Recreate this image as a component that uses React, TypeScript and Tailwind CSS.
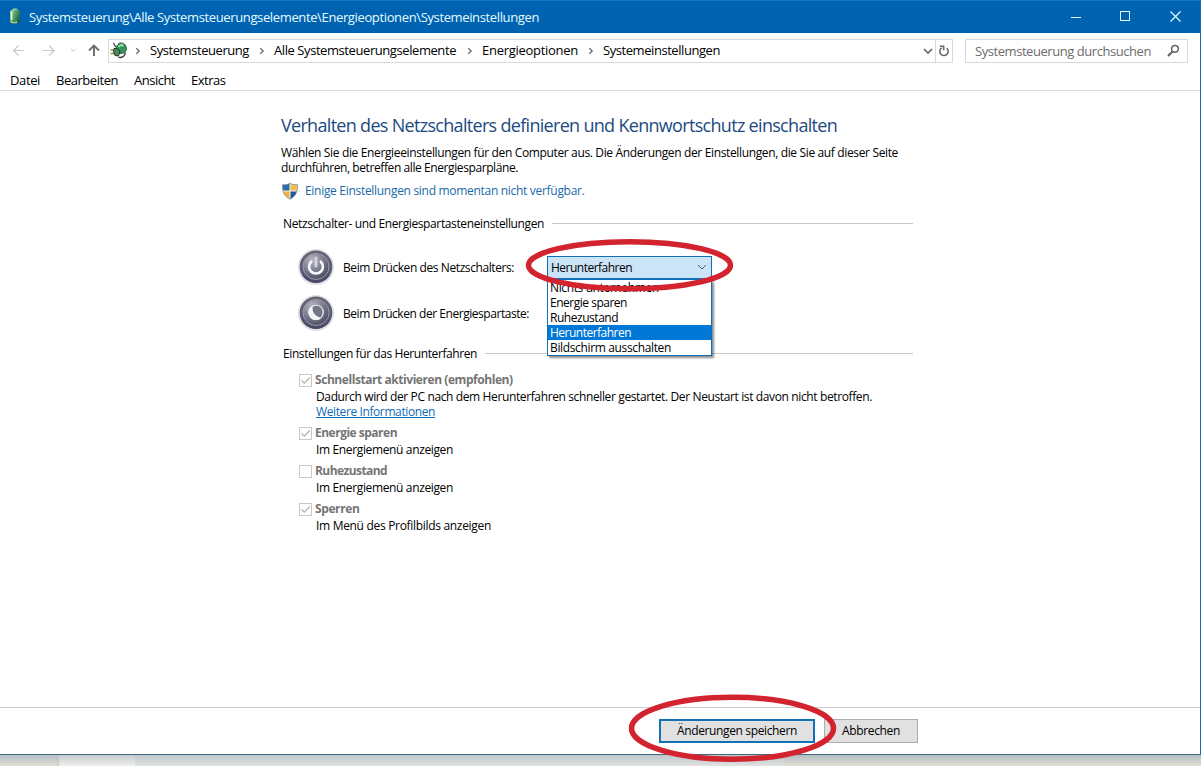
import React from "react";

function BatteryIcon() {
  return (
    <svg width="14" height="17" viewBox="0 0 14 17" className="shrink-0">
      <defs>
        <linearGradient id="bat" x1="0" x2="1" y1="0" y2="0.6">
          <stop offset="0" stopColor="#d3efb8" />
          <stop offset="0.45" stopColor="#58ac6c" />
          <stop offset="1" stopColor="#1a5f50" />
        </linearGradient>
      </defs>
      <rect x="4.500" y="0.500" width="5" height="3" rx="1" fill="#9fd5b0" />
      <rect x="2" y="1.800" width="10" height="13.400" rx="3" fill="url(#bat)" />
      <path d="M3.700 4v8" stroke="#e6f7cf" strokeWidth="1.400" />
      <path d="M2 12c2 2.200 5 2.400 7 1v2.200H4.500c-1.500 0-2.500-1-2.500-3.200z" fill="#b9c58c" />
    </svg>
  );
}

function PlugIcon() {
  return (
    <svg width="18" height="17" viewBox="0 0 18 17" className="shrink-0">
      <path d="M3.500 0.800c.5 2 1 3 2.800 4" stroke="#33423a" strokeWidth="1.200" fill="none" />
      <path d="M8 1.600c2.500-1.600 6.500-.8 7.800 2.400" stroke="#4f6b5a" strokeWidth="1" fill="none" />
      <ellipse cx="11.200" cy="6.600" rx="5.200" ry="4.800" fill="#2f9a58" stroke="#1c5b3c" />
      <path d="M8.500 4.800c1.200-1.700 3.500-2 5-1" stroke="#b4efbc" strokeWidth="1.700" fill="none" />
      <path d="M0.500 8h4M0.500 11.500h4" stroke="#a08a4c" strokeWidth="1.500" />
      <path d="M4 6.500l3.500 0 2.500 2.500-1.500 5-3.500-.5-1.300-3.500z" fill="#4d8a5e" stroke="#25362c" />
      <path d="M8.500 15.300c3.500.6 6.500-.8 6.800-4.800" stroke="#33423a" strokeWidth="1.500" fill="none" />
    </svg>
  );
}

function Chevron() {
  return (
    <svg width="6" height="8" viewBox="0 0 6 8" className="shrink-0">
      <path d="M1.300 1.200L4.200 4 1.300 6.800" fill="none" stroke="#6a6a6a" strokeWidth="1.300" />
    </svg>
  );
}

function Shield() {
  return (
    <svg width="18" height="18" viewBox="0 0 18 18" className="shrink-0">
      <defs>
        <clipPath id="sh">
          <path d="M9 1.200C7 2.700 4.500 3.200 2 3c-.5 6 1 11 7 13.800C15 14 16.500 9 16 3c-2.500.2-5-.3-7-1.800z" />
        </clipPath>
      </defs>
      <path d="M9 .4C7 2 4 2.500 1.200 2.300.6 9 2.500 14.500 9 17.700 15.500 14.500 17.400 9 16.800 2.300 14 2.500 11 2 9 .4z" fill="#8593a5" />
      <g clipPath="url(#sh)">
        <rect width="9" height="9" fill="#2f6cab" />
        <rect x="9" width="9" height="9" fill="#f0bd50" />
        <rect y="9" width="9" height="9" fill="#eeb545" />
        <rect x="9" y="9" width="9" height="9" fill="#24599b" />
        <path d="M9 0v18M0 9h18" stroke="#f6f1dc" strokeWidth="1" />
      </g>
    </svg>
  );
}

function RoundButton({ kind }: { kind: "power" | "sleep" }) {
  return (
    <svg width="38" height="38" viewBox="0 0 38 38" className="shrink-0">
      <defs>
        <linearGradient id={"ring" + kind} x1="0" x2="0" y1="0" y2="1">
          <stop offset="0" stopColor="#666672" />
          <stop offset="0.6" stopColor="#5d5c74" />
          <stop offset="1" stopColor="#454462" />
        </linearGradient>
        <radialGradient id={"face" + kind} cx="0.35" cy="0.25" r="0.85">
          <stop offset="0" stopColor="#b5b5c0" />
          <stop offset="0.5" stopColor="#7d7d90" />
          <stop offset="1" stopColor="#414159" />
        </radialGradient>
      </defs>
      <circle cx="19" cy="19" r="18" fill="#e0e0e6" />
      <circle cx="19" cy="18.700" r="16.300" fill={`url(#ring${kind})`} />
      <circle cx="19" cy="18.500" r="13" fill={`url(#face${kind})`} stroke="#9b9bad" strokeWidth="1" />
      {kind === "power" ? (
        <g fill="none" stroke="#f7f7fb" strokeLinecap="round">
          <path d="M14.200 13.700a6.900 6.900 0 1 0 9.600 0" strokeWidth="2.600" />
          <path d="M19 10v8" strokeWidth="3" stroke="#d3d3dc" />
        </g>
      ) : (
        <g>
          <circle cx="19" cy="18.500" r="7.800" fill="#f5f5f9" />
          <path d="M15.800 12.800c3-2.200 9.500-.8 9.800 5.200 0 2.200-.8 4.200-2.200 5.500-5-1-8.800-5.700-7.600-10.700z" fill="#757588" />
        </g>
      )}
    </svg>
  );
}

function SectionTitle({ text, track }: { text: string; track: string }) {
  return (
    <div className="flex h-4 w-[632px] items-center gap-2 pl-0.5">
      <span className={track}>{text}</span>
      <span className="h-px flex-1 bg-[#c8c8c8]" />
    </div>
  );
}

function Check({ on, label, track }: { on: boolean; label: string; track: string }) {
  return (
    <div className="flex h-[17px] items-center gap-[3px] pl-[18px] font-bold text-[#757575]">
      <svg width="13" height="13" viewBox="0 0 13 13" className="mt-px shrink-0">
        <rect x="0.5" y="0.5" width="12" height="12" fill="#fff" stroke="#c8c8c8" />
        {on && <path d="M2.500 6.500l2.800 2.700 5.500-5.700" fill="none" stroke="#b0b0b0" strokeWidth="1.200" />}
      </svg>
      <span className={track}>{label}</span>
    </div>
  );
}

function TitleBar() {
  return (
    <header className="flex h-[33px] shrink-0 items-center border-t border-[#1573c0] bg-[#0063b1] pl-2 text-[13px] text-[#e6fbff]">
      <span className="-mt-px">
        <BatteryIcon />
      </span>
      <span className="ml-[7px] pt-px tracking-[-0.366px]">
        Systemsteuerung\Alle Systemsteuerungselemente\Energieoptionen\Systemeinstellungen
      </span>
      <svg width="112" height="12" viewBox="0 0 112 12" className="mr-[18px] ml-auto" fill="none" stroke="#e6fbff">
        <path d="M1 6.500h10" />
        <rect x="50.500" y="0.500" width="9" height="9" />
        <path d="M100.500 0.500l10 10M110.500 0.500l-10 10" strokeWidth="1.200" />
      </svg>
    </header>
  );
}

function AddressBar() {
  return (
    <div className="flex h-[34px] shrink-0 items-center pt-px text-[13px]">
      <svg width="92" height="14" viewBox="0 0 92 14" className="ml-3 shrink-0" fill="none">
        <path d="M12.500 6.500H1.500M6.500 1.500L1.500 6.500l5 5M31 6.500h11M37 1.500l5 5-5 5" stroke="#c9c9c9" strokeWidth="1.200" />
        <path d="M59 5l2.300 2.300 2.300-2.300" stroke="#c9c9c9" />
        <path d="M82 12V1.500M77 6.500l5-5 5 5" stroke="#6e6e6e" strokeWidth="1.900" />
      </svg>
      <div className="ml-1 flex h-6 w-[845px] items-center border border-[#d9d9d9]">
        <span className="ml-px">
          <PlugIcon />
        </span>
        <div className="ml-[7px] flex h-5 items-center">
          <Chevron />
          <span className="ml-[9px] w-[99px] tracking-[-0.435px]">Systemsteuerung</span>
          <span className="ml-[10px]"><Chevron /></span>
          <span className="ml-[9px] w-[182px] tracking-[-0.424px]">Alle Systemsteuerungselemente</span>
          <span className="ml-[11px]"><Chevron /></span>
          <span className="ml-[9px] w-[96px] tracking-[-0.28px]">Energieoptionen</span>
          <span className="ml-[10px]"><Chevron /></span>
          <span className="ml-[9px] tracking-[-0.438px]">Systemeinstellungen</span>
        </div>
        <svg width="10" height="8" viewBox="0 0 10 8" className="mr-[2px] ml-auto" fill="none">
          <path d="M1 2l4 4 4-4" stroke="#666" strokeWidth="1.700" />
        </svg>
        <span className="flex h-full w-[17px] items-center justify-center border-l border-[#d9d9d9]">
          <svg width="12" height="12" viewBox="0 0 11 12" fill="none">
            <path d="M3.200 2.800A4.200 4.200 0 1 0 8.300 3.200" stroke="#666" strokeWidth="1.600" />
            <path d="M1.300 1.300h3.900v3.900" stroke="#666" strokeWidth="1.500" />
          </svg>
        </span>
      </div>
      <div className="ml-3 flex h-6 w-[223px] items-center justify-between border border-[#d9d9d9] pr-[7px] pl-[9px] text-[#6d6d6d]">
        <span className="h-5 leading-5 tracking-[-0.444px]">Systemsteuerung durchsuchen</span>
        <svg width="13" height="13" viewBox="0 0 13 13" fill="none" stroke="#5f5f5f">
          <circle cx="8" cy="4.800" r="3.400" strokeWidth="1.500" />
          <path d="M5.500 7.500L1 12" strokeWidth="1.900" />
        </svg>
      </div>
    </div>
  );
}

function Dropdown() {
  return (
    <div className="relative mt-0.5 ml-auto w-[165px]">
      <div className="flex h-6 items-center justify-between border border-b-2 border-[#0f6fb8] bg-[#cce4f7] pr-1 pl-[3px]">
        <span className="tracking-[-0.514px]">Herunterfahren</span>
        <svg width="10" height="7" viewBox="0 0 10 7" fill="none">
          <path d="M1 1l4 4 4-4" stroke="#4d5f6c" />
        </svg>
      </div>
      <ul className="absolute top-6 left-0 z-10 w-full border border-t-0 border-[#0f6fb8] bg-white leading-[15px] shadow-[2px_2px_2px_rgba(0,0,0,0.45)]">
        <li className="h-[15px] pl-0.5 tracking-[-0.38px]">Nichts unternehmen</li>
        <li className="h-[15px] pl-0.5 tracking-[-0.486px]">Energie sparen</li>
        <li className="h-[15px] pl-0.5 tracking-[-0.46px]">Ruhezustand</li>
        <li className="h-[15px] bg-[#0078d7] pl-0.5 tracking-[-0.514px] text-white">Herunterfahren</li>
        <li className="h-[15px] pl-0.5 tracking-[-0.354px]">Bildschirm ausschalten</li>
      </ul>
    </div>
  );
}

export default function App() {
  return (
    <div className="relative flex h-[766px] w-[1201px] flex-col overflow-hidden bg-white font-['Open_Sans','Noto_Sans',sans-serif] whitespace-nowrap text-black">
      <div className="flex h-[755px] shrink-0 flex-col border-r border-b border-r-[#1c69ad] border-b-[#44697f]">
        <TitleBar />
        <AddressBar />
        <nav className="flex h-6 shrink-0 items-center border-b border-[#d9d9d9] pt-1 pl-[10px] text-[13px]">
          <span className="w-[46px] tracking-[-0.374px]">Datei</span>
          <span className="w-[78px] tracking-[-0.468px]">Bearbeiten</span>
          <span className="w-[57px] tracking-[-0.5px]">Ansicht</span>
          <span className="tracking-[-0.5px]">Extras</span>
        </nav>

        <main className="flex-1 pt-[22px] pl-[281px] text-xs leading-[15px]">
          <h1 className="h-6 text-[18px] leading-6 tracking-[-0.692px] text-[#1d4a7f]">
            Verhalten des Netzschalters definieren und Kennwortschutz einschalten
          </h1>
          <p className="mt-[8px]">
            <span className="tracking-[-0.356px]">
              Wählen Sie die Energieeinstellungen für den Computer aus. Die Änderungen der Einstellungen, die Sie auf dieser Seite
            </span>
            <br />
            <span className="tracking-[-0.41px]">durchführen, betreffen alle Energiesparpläne.</span>
          </p>
          <div className="mt-[7px] flex h-[18px] items-center gap-1.5 text-[#1a69a8]">
            <Shield />
            <span className="pb-0.5 tracking-[-0.3px]">Einige Einstellungen sind momentan nicht verfügbar.</span>
          </div>
          <div className="mt-[15px]">
            <SectionTitle text="Netzschalter- und Energiespartasteneinstellungen" track="tracking-[-0.378px]" />
          </div>
          <div className="mt-[12px] flex h-[47px] w-[431px] items-center pl-4">
            <RoundButton kind="power" />
            <span className="ml-2 pt-0.5 tracking-[-0.416px]">Beim Drücken des Netzschalters:</span>
            <Dropdown />
          </div>
          <div className="flex h-[46px] items-center pl-4">
            <RoundButton kind="sleep" />
            <span className="ml-2 tracking-[-0.456px]">Beim Drücken der Energiespartaste:</span>
          </div>
          <div className="mt-[9px]">
            <SectionTitle text="Einstellungen für das Herunterfahren" track="tracking-[-0.41px]" />
          </div>
          <div className="mt-[10px]">
            <Check on label="Schnellstart aktivieren (empfohlen)" track="tracking-[-0.44px]" />
            <p className="mt-px pl-[35px] tracking-[-0.375px]">
              Dadurch wird der PC nach dem Herunterfahren schneller gestartet. Der Neustart ist davon nicht betroffen.
            </p>
            <p className="pl-[35px] tracking-[-0.393px] text-[#0f6cb8] underline">Weitere Informationen</p>
          </div>
          <div className="mt-[5px]">
            <Check on label="Energie sparen" track="tracking-[-0.5px]" />
            <p className="mt-px pl-[35px] tracking-[-0.359px]">Im Energiemenü anzeigen</p>
          </div>
          <div className="mt-[5px]">
            <Check on={false} label="Ruhezustand" track="tracking-[-0.58px]" />
            <p className="mt-px pl-[35px] tracking-[-0.359px]">Im Energiemenü anzeigen</p>
          </div>
          <div className="mt-[5px]">
            <Check on label="Sperren" track="tracking-[-0.4px]" />
            <p className="mt-px pl-[35px] tracking-[-0.31px]">Im Menü des Profilbilds anzeigen</p>
          </div>
        </main>

        <footer className="flex h-[47px] shrink-0 items-center gap-[9px] border-t border-[#cdcdcd] pl-[659px] text-xs">
          <button className="h-6 w-[156px] border-2 border-[#1272b5] bg-[#e1e1e1] tracking-[-0.366px]">
            Änderungen speichern
          </button>
          <button className="h-6 w-[94px] border border-[#adadad] bg-[#e1e1e1] tracking-[-0.347px]">Abbrechen</button>
        </footer>
      </div>

      <div className="flex flex-1">
        <span className="w-[59px] border-r border-[#c4c7c0] bg-linear-to-b from-[#b4bfca] to-[#dfdfd0]" />
        <span className="w-[76px] bg-linear-to-b from-[#c5cccd] to-[#efefef]" />
        <span className="w-[650px] bg-linear-to-b from-[#bcc6c8] to-[#e2e2e2]" />
        <span className="flex-1 bg-linear-to-b from-[#b3bec4] to-[#e1dfd2]" />
      </div>

      <svg className="pointer-events-none absolute inset-0 z-20" width="1201" height="766" fill="none" stroke="#d2232f">
        <ellipse cx="629.500" cy="265.200" rx="101" ry="23.500" strokeWidth="5.500" />
        <ellipse cx="732.500" cy="728.200" rx="101" ry="31" strokeWidth="5.500" />
      </svg>
    </div>
  );
}
